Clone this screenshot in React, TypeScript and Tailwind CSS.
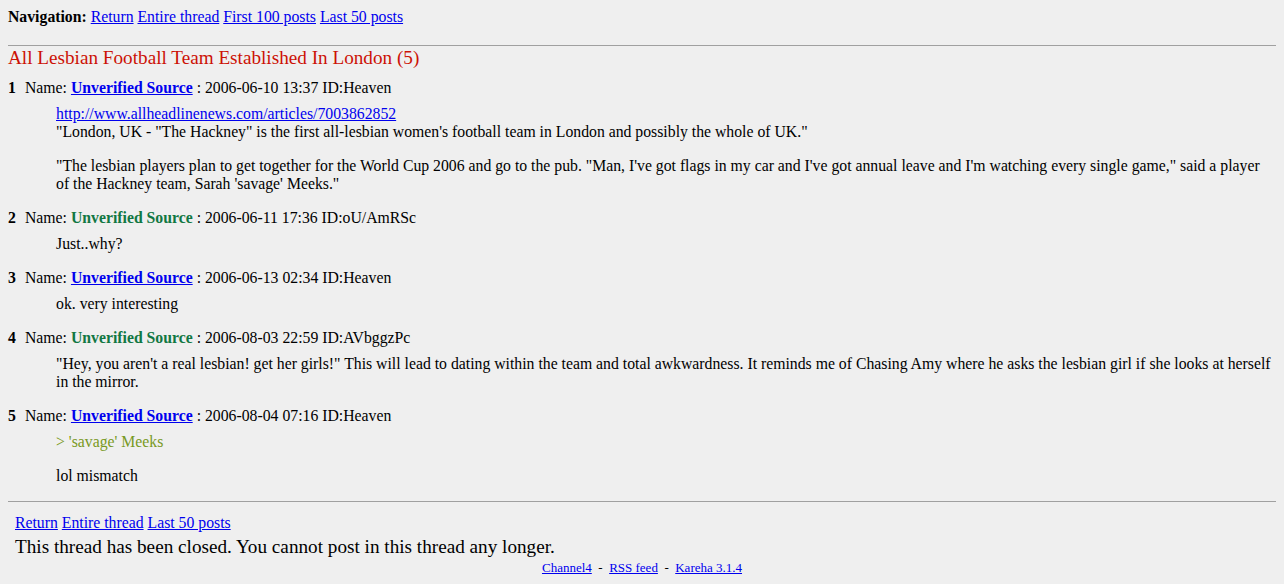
import React from "react";

const A = ({ children, bold = false }: { children: React.ReactNode; bold?: boolean }) => (
  <a href="#" className={`text-[#0000ee] underline ${bold ? "font-bold" : ""}`}>
    {children}
  </a>
);

type Post = {
  n: number;
  link: boolean;
  date: string;
  id: string;
  body: React.ReactNode[];
};

const posts: Post[] = [
  {
    n: 1,
    link: true,
    date: "2006-06-10 13:37",
    id: "Heaven",
    body: [
      <p key="a">
        <A>http://www.allheadlinenews.com/articles/7003862852</A>
        <br />
        "London, UK - "The Hackney" is the first all-lesbian women's football team in London and possibly the whole of UK."
      </p>,
      <p key="b">
        "The lesbian players plan to get together for the World Cup 2006 and go to the pub. "Man, I've got flags in my car and I've got annual leave and I'm watching every single game," said a player of the Hackney team, Sarah 'savage' Meeks."
      </p>,
    ],
  },
  { n: 2, link: false, date: "2006-06-11 17:36", id: "oU/AmRSc", body: [<p key="a">Just..why?</p>] },
  { n: 3, link: true, date: "2006-06-13 02:34", id: "Heaven", body: [<p key="a">ok. very interesting</p>] },
  {
    n: 4,
    link: false,
    date: "2006-08-03 22:59",
    id: "AVbggzPc",
    body: [
      <p key="a">
        "Hey, you aren't a real lesbian! get her girls!" This will lead to dating within the team and total awkwardness. It reminds me of Chasing Amy where he asks the lesbian girl if she looks at herself in the mirror.
      </p>,
    ],
  },
  {
    n: 5,
    link: true,
    date: "2006-08-04 07:16",
    id: "Heaven",
    body: [
      <p key="a" className="text-[#789922]">&gt; 'savage' Meeks</p>,
      <p key="b">lol mismatch</p>,
    ],
  },
];

export default function App() {
  return (
    <div
      className="min-h-[584px] bg-[#efefef] text-black px-2 pt-2 text-[15.75px] leading-[18px]"
      style={{ fontFamily: '"Liberation Serif", "Times New Roman", serif' }}
    >
      <div>
        <b>Navigation:</b> <A>Return</A> <A>Entire thread</A> <A>First 100 posts</A> <A>Last 50 posts</A>
      </div>
      <div className="mt-[19px] border-t border-[#a0a0a0]" />
      <h2 className="text-[19.2px] leading-[23px] text-[#cc1105]">All Lesbian Football Team Established In London (5)</h2>
      <div className="mt-[10px]">
        {posts.map((p) => (
          <div key={p.n} className="mb-[16px]">
            <div className="flex">
              <b className="w-[17px]">{p.n}</b>
              <span>
                Name:{" "}
                {p.link ? (
                  <A bold>Unverified Source</A>
                ) : (
                  <b className="text-[#117743]">Unverified Source</b>
                )}{" "}
                : {p.date} ID:{p.id}
              </span>
            </div>
            <div className="mt-[8px] ml-[48px] flex flex-col gap-[16px]">{p.body}</div>
          </div>
        ))}
      </div>
      <div className="mt-[2px] border-t border-[#a0a0a0]" />
      <div className="pl-[7px] mt-[12px]">
        <div>
          <A>Return</A> <A>Entire thread</A> <A>Last 50 posts</A>
        </div>
        <div className="text-[19.2px] leading-[24px] mt-[3px]">
          This thread has been closed. You cannot post in this thread any longer.
        </div>
      </div>
      <div className="text-center text-[13px] leading-[15px] mt-[1px]">
        <A>Channel4</A> &nbsp;-&nbsp; <A>RSS feed</A> &nbsp;-&nbsp; <A>Kareha 3.1.4</A>
      </div>
    </div>
  );
}
